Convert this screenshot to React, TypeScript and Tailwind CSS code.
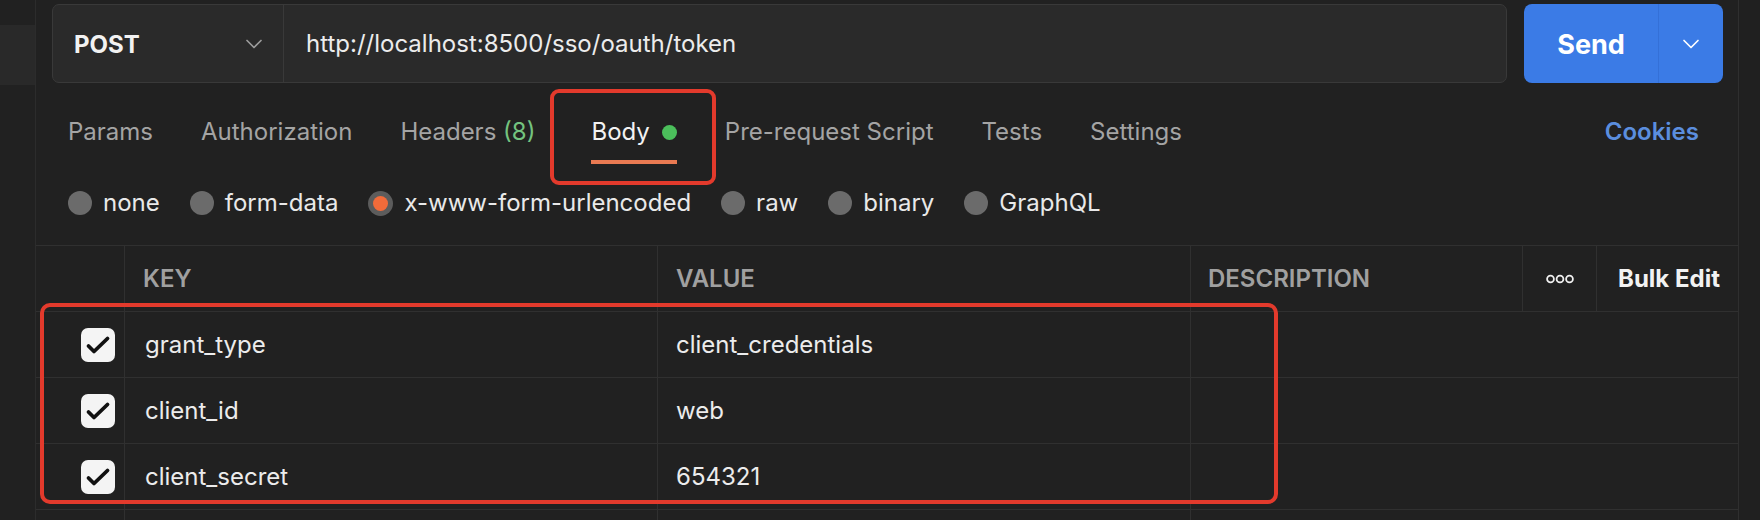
import React from 'react';

function ChevronDown({ className }: { className?: string }) {
  return (
    <svg width="18" height="10" viewBox="0 0 18 10" fill="none" className={className}>
      <path d="M2 1.5l7 7 7-7" stroke="currentColor" strokeWidth="1.7" strokeLinecap="round" strokeLinejoin="round" />
    </svg>
  );
}

function Checkbox() {
  return (
    <div className="flex h-[34px] w-[34px] items-center justify-center rounded-[7px] bg-[#f4f4f4]">
      <svg width="34" height="34" viewBox="0 0 34 34" fill="none">
        <path d="M7.5 18l5.5 5.5L26.5 10.5" stroke="#111" strokeWidth="3.8" strokeLinecap="round" strokeLinejoin="round" />
      </svg>
    </div>
  );
}

function Radio({ label, selected }: { label: string; selected?: boolean }) {
  return (
    <div className="flex items-center gap-[11px]">
      {selected ? (
        <div className="flex h-[25px] w-[25px] items-center justify-center rounded-full bg-[#5c5c5c]">
          <div className="h-[15px] w-[15px] rounded-full bg-[#f26b3a]" />
        </div>
      ) : (
        <div className="h-[24px] w-[24px] rounded-full bg-[#6b6b6b]" />
      )}
      <span className="text-[24px] leading-[30px] text-[#e9e9e9]">{label}</span>
    </div>
  );
}

export default function App() {
  const rows = [
    ['grant_type', 'client_credentials'],
    ['client_id', 'web'],
    ['client_secret', '654321'],
  ];

  return (
    <div className="flex h-[520px] w-[1760px] overflow-hidden bg-[#212121] font-[Inter,sans-serif] text-[#e9e9e9]">
      {/* left sidebar strip */}
      <div className="w-[36px] shrink-0 border-r border-[#2c2c2c] bg-[#212121]">
        <div className="mt-[25px] h-[60px] bg-[#292929]" />
      </div>

      {/* main */}
      <div className="flex w-[1702px] shrink-0 flex-col">
        {/* URL row */}
        <div className="flex pl-[16px] pt-[4px]">
          <div className="flex h-[79px] w-[1455px] rounded-[7px] border border-[#393939] bg-[#2a2a2a]">
            <div className="flex w-[231px] items-center justify-between border-r border-[#393939] pl-[21px] pr-[20px]">
              <span className="pt-[3px] text-[24px] font-bold text-[#f2f2f2]">POST</span>
              <ChevronDown className="text-[#9c9c9c]" />
            </div>
            <div className="flex items-center pl-[22px] text-[24px] text-[#ececec]">
              http://localhost:8500/sso/oauth/token
            </div>
          </div>
          <div className="ml-[17px] flex h-[79px] w-[199px] rounded-[8px] bg-[#3b7be6]">
            <div className="flex w-[135px] items-center justify-center border-r border-[#3470d8] pt-[4px] text-[27px] font-bold text-white">
              Send
            </div>
            <div className="flex flex-1 items-center justify-center text-white">
              <ChevronDown />
            </div>
          </div>
        </div>

        {/* Tabs row */}
        <div className="mt-[34px] flex h-[47px] items-start pl-[32px] pr-[39px] text-[24px] leading-[30px] text-[#a4a4a4]">
          <div className="flex items-start gap-[48px]">
            <span>Params</span>
            <span>Authorization</span>
            <span>
              Headers <span className="text-[#74c37f]">(8)</span>
            </span>
            <div className="relative ml-[8px] flex flex-col">
              <div className="flex items-center gap-[12px] text-[#f2f2f2]">
                <span>Body</span>
                <div className="h-[15px] w-[15px] rounded-full bg-[#4bbf5b]" />
              </div>
              <div className="mt-[13px] h-[4px] bg-[#e97a52]" />
              <div className="pointer-events-none absolute -top-[28px] -right-[39px] -bottom-[21px] -left-[41px] rounded-[9px] border-[4px] border-[#e33a2c]" />
            </div>
            <span>Pre-request Script</span>
            <span>Tests</span>
            <span>Settings</span>
          </div>
          <span className="ml-auto font-semibold text-[#5b8ede]">Cookies</span>
        </div>

        {/* Radio row */}
        <div className="mt-[24px] flex h-[30px] items-center gap-[30px] pl-[32px]">
          <Radio label="none" />
          <Radio label="form-data" />
          <Radio label="x-www-form-urlencoded" selected />
          <Radio label="raw" />
          <Radio label="binary" />
          <Radio label="GraphQL" />
        </div>

        {/* Table */}
        <div className="mt-[27px] border-t border-[#303030]">
          <div className="grid h-[66px] grid-cols-[89px_533px_533px_332px_74px_141px] border-b border-[#303030] text-[24px]">
            <div className="border-r border-[#303030]" />
            <div className="flex items-center border-r border-[#303030] pl-[18px] font-semibold text-[#a0a0a0]">KEY</div>
            <div className="flex items-center border-r border-[#303030] pl-[18px] font-semibold text-[#a0a0a0]">VALUE</div>
            <div className="flex items-center border-r border-[#303030] pl-[17px] font-semibold text-[#a0a0a0]">DESCRIPTION</div>
            <div className="flex items-center justify-center border-r border-[#303030]">
              <svg width="28" height="10" viewBox="0 0 28 10" fill="none">
                <circle cx="4.5" cy="5" r="3.4" stroke="#f0f0f0" strokeWidth="1.8" />
                <circle cx="14" cy="5" r="3.4" stroke="#f0f0f0" strokeWidth="1.8" />
                <circle cx="23.5" cy="5" r="3.4" stroke="#f0f0f0" strokeWidth="1.8" />
              </svg>
            </div>
            <div className="flex items-center pl-[21px] font-bold text-[#f2f2f2]">Bulk Edit</div>
          </div>

          <div className="relative">
            {rows.map(([k, v]) => (
              <div key={k} className="grid h-[66px] grid-cols-[89px_533px_533px_1fr] border-b border-[#303030] text-[24px] text-[#ececec]">
                <div className="flex items-center border-r border-[#303030] pl-[45px]">
                  <Checkbox />
                </div>
                <div className="flex items-center border-r border-[#303030] pl-[20px]">{k}</div>
                <div className="flex items-center border-r border-[#303030] pl-[18px]">{v}</div>
                <div />
              </div>
            ))}
            <div className="grid h-[66px] grid-cols-[89px_533px_533px_1fr]">
              <div className="border-r border-[#303030]" />
              <div className="border-r border-[#303030]" />
              <div className="border-r border-[#303030]" />
              <div />
            </div>
            <div className="pointer-events-none absolute left-[4px] top-[-9px] h-[201px] w-[1238px] rounded-[10px] border-[4px] border-[#e33a2c]" />
          </div>
        </div>
      </div>

      {/* right strip */}
      <div className="flex-1 border-l border-[#2f2f2f] bg-[#202020]" />
    </div>
  );
}
